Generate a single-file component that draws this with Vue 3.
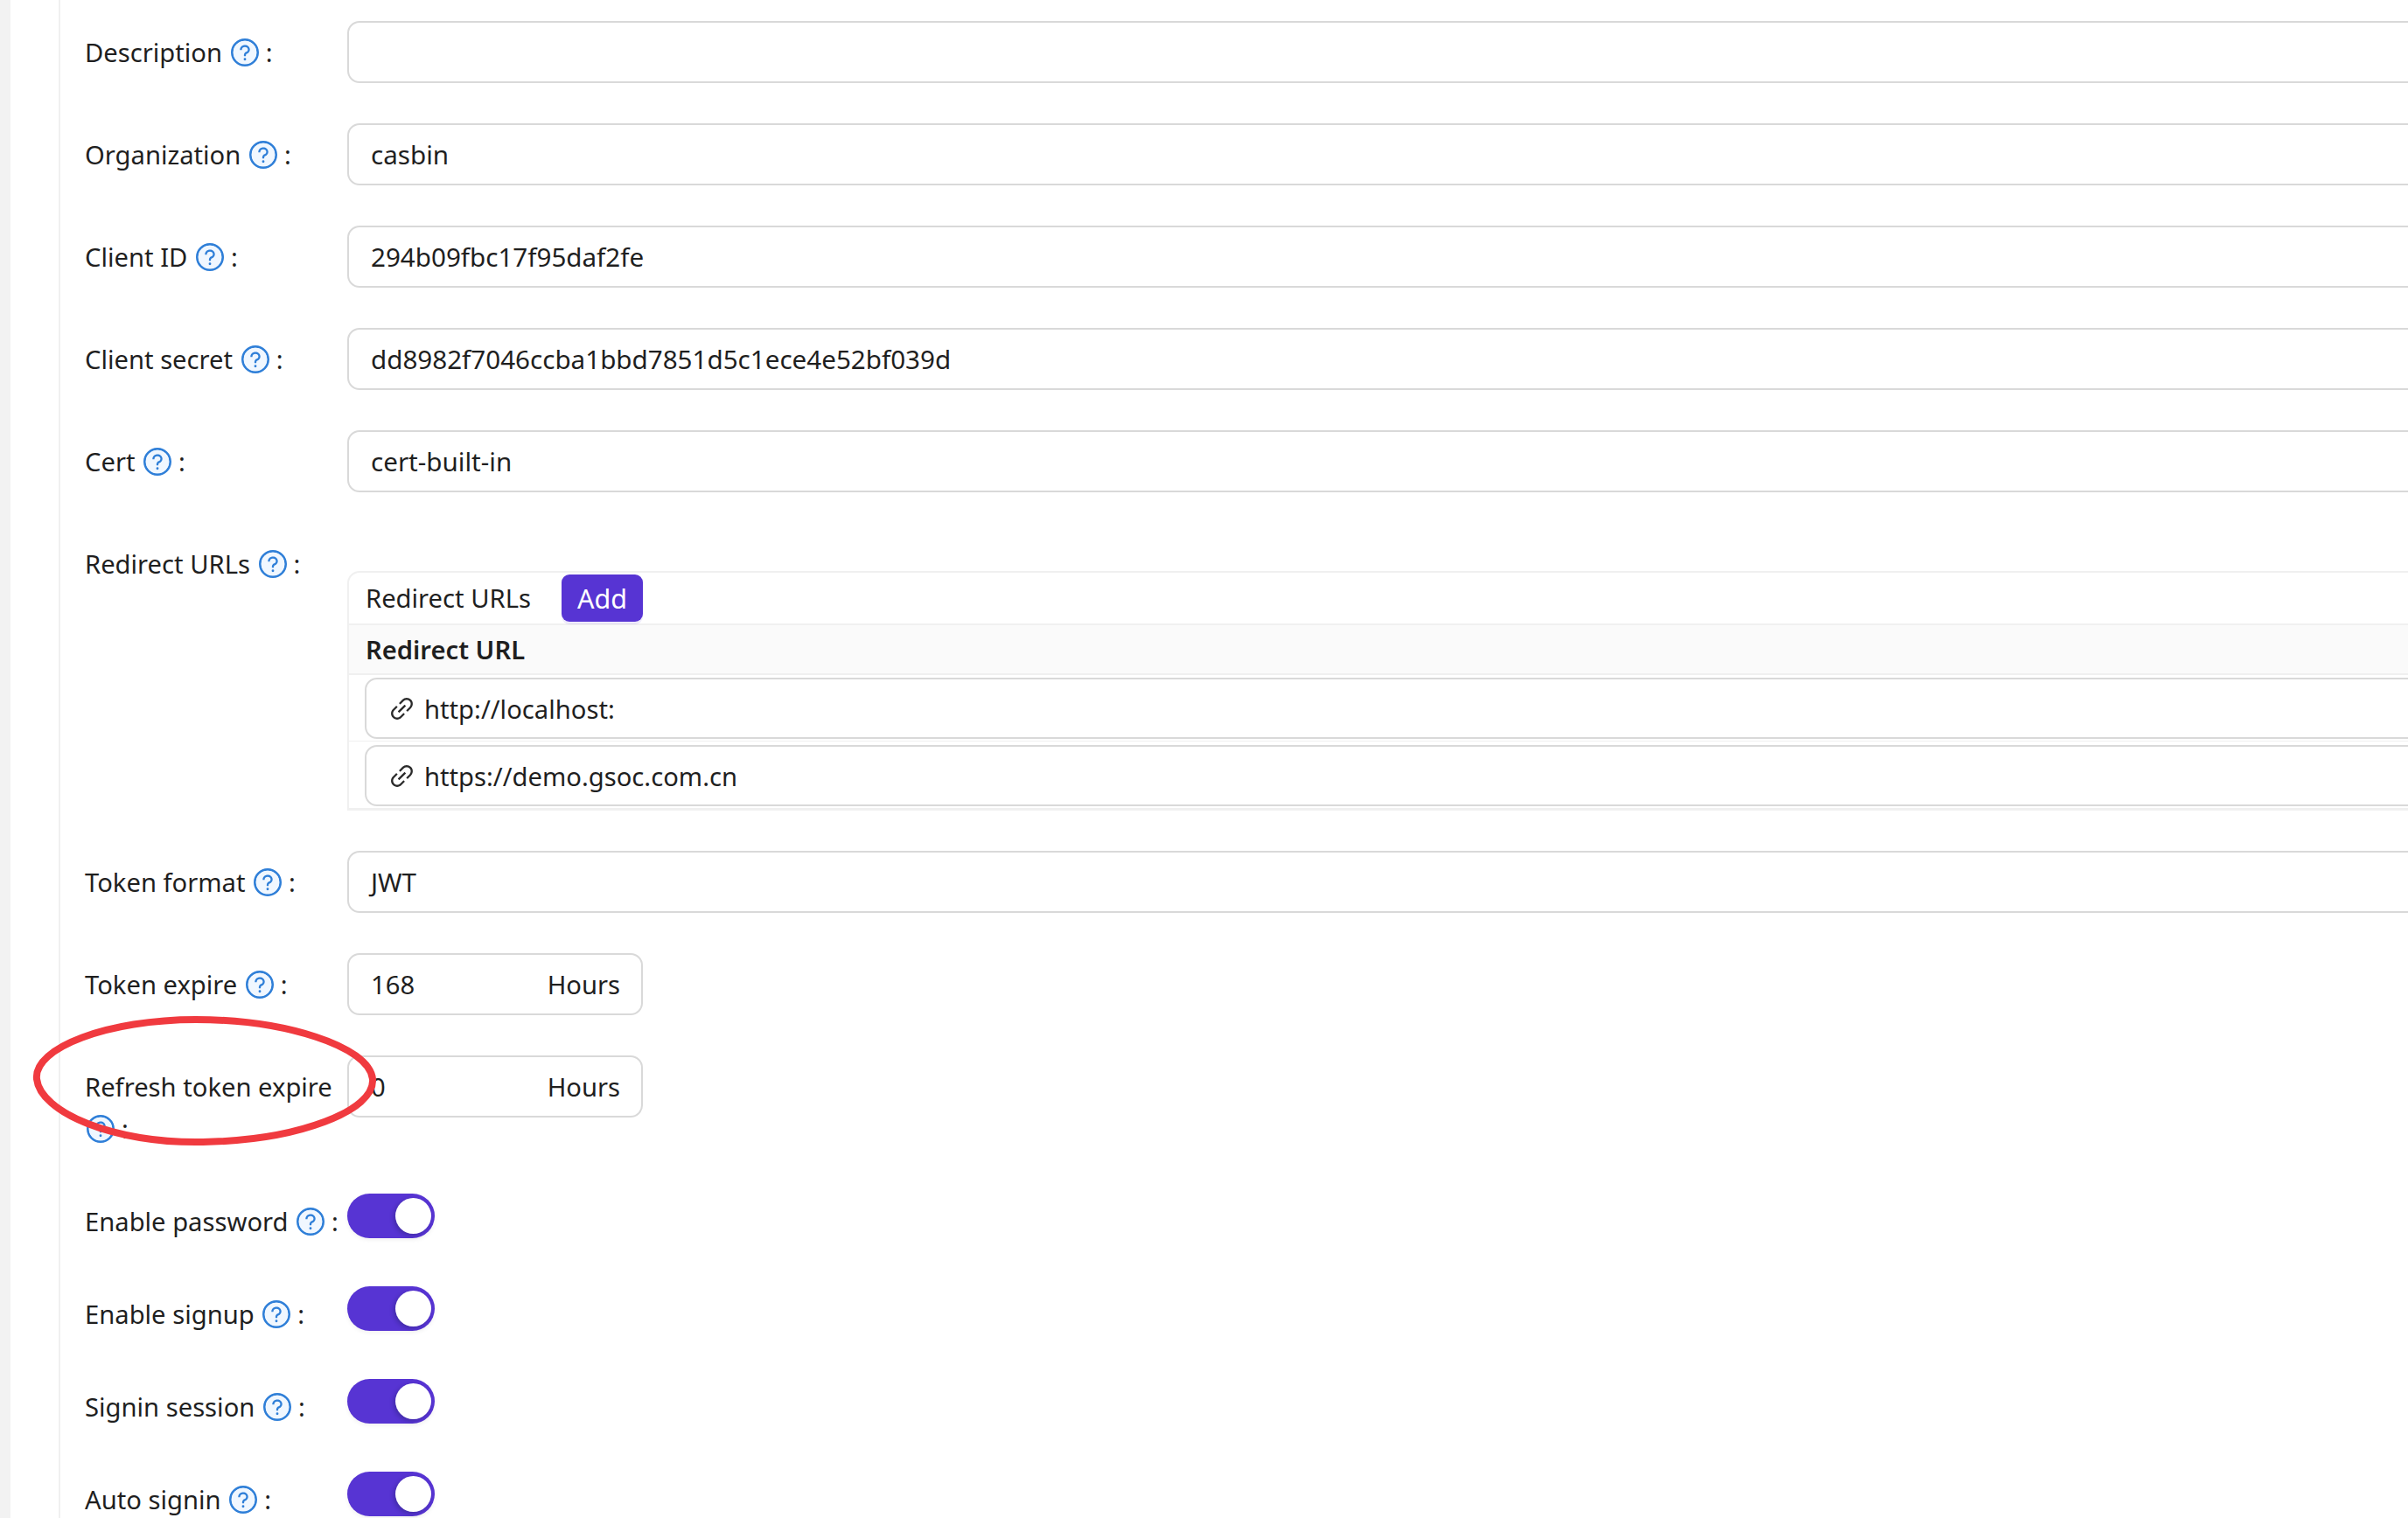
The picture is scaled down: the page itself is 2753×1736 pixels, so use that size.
<template>
  <div class="page">
    <div class="strip"></div>
    <div class="card">
      <div
        v-for="row in rows"
        :key="row.label"
        class="row"
      >
        <div class="label">
          {{ row.label }}
          <svg class="help" viewBox="64 64 896 896">
            <path fill="#2f7fd8" d="M512 64C264.6 64 64 264.6 64 512s200.6 448 448 448 448-200.6 448-448S759.4 64 512 64zm0 820c-205.4 0-372-166.6-372-372s166.6-372 372-372 372 166.6 372 372-166.6 372-372 372z" />
            <circle cx="512" cy="512" r="372" fill="#f0f7ff" />
            <path fill="#2f7fd8" d="M472 728a40 40 0 1080 0 40 40 0 10-80 0zM623.6 316.7C593.6 290.4 554 276 512 276s-81.6 14.5-111.6 40.7C369.2 344 352 380.7 352 420v7.6c0 4.4 3.6 8 8 8h48c4.4 0 8-3.6 8-8V420c0-44.1 43.1-80 96-80s96 35.9 96 80c0 31.1-22 59.4-56.1 72.5-21.2 8.1-39.2 22.3-52.1 40.9-13.1 19-19.9 41.8-19.9 64.9V620c0 4.4 3.6 8 8 8h48c4.4 0 8-3.6 8-8v-22.7a48.3 48.3 0 0130.9-44.8c59-22.7 97.1-74.7 97.1-132.5.1-39.3-17.1-76-48.3-103.3z" />
          </svg>
          <span class="colon">:</span>
        </div>

        <!-- Text input -->
        <div v-if="row.type === 'text'" class="input">{{ row.value }}</div>

        <!-- Number + unit -->
        <div v-else-if="row.type === 'number'" class="input input-number">
          <span>{{ row.value }}</span>
          <span>Hours</span>
        </div>

        <!-- Switch -->
        <div v-else-if="row.type === 'switch'" class="switch"><span class="knob"></span></div>

        <!-- Redirect URLs table -->
        <div v-else class="table">
          <div class="table-title">
            <span>Redirect URLs</span>
            <button class="btn-add">Add</button>
          </div>
          <div class="table-head">Redirect URL</div>
          <div v-for="url in urls" :key="url" class="table-row">
            <div class="input url-input">
              <svg class="link" viewBox="64 64 896 896">
                <path fill="#2b2b2b" d="M574 665.4a8.03 8.03 0 00-11.3 0L446.5 781.6c-53.8 53.8-144.6 59.5-204 0-59.5-59.5-53.8-150.2 0-204l116.2-116.2c3.1-3.1 3.1-8.2 0-11.3l-39.8-39.8a8.03 8.03 0 00-11.3 0L191.4 526.5c-84.6 84.6-84.6 221.5 0 306s221.5 84.6 306 0l116.2-116.2c3.1-3.1 3.1-8.2 0-11.3L574 665.4zm258.6-474c-84.6-84.6-221.5-84.6-306 0L410.3 307.6a8.03 8.03 0 000 11.3l39.7 39.7c3.1 3.1 8.2 3.1 11.3 0l116.2-116.2c53.8-53.8 144.6-59.5 204 0 59.5 59.5 53.8 150.2 0 204L665.3 562.6a8.03 8.03 0 000 11.3l39.8 39.8c3.1 3.1 8.2 3.1 11.3 0l116.2-116.2c84.5-84.6 84.5-221.5 0-306.1zM610.1 372.3a8.03 8.03 0 00-11.3 0L372.3 598.7a8.03 8.03 0 000 11.3l39.6 39.6c3.1 3.1 8.2 3.1 11.3 0l226.4-226.4c3.1-3.1 3.1-8.2 0-11.3l-39.5-39.6z" />
              </svg>
              <span>{{ url }}</span>
            </div>
          </div>
        </div>
      </div>
    </div>

    <!-- Red marker drawn over the screenshot -->
    <svg class="marker" viewBox="0 0 400 155">
      <path d="M8 74C4 38 90 6 190 6c100 0 198 30 202 68 3 36-84 70-194 72C96 148 12 112 8 74z" />
    </svg>
  </div>
</template>

<script setup>
const rows = [
  { label: 'Description', type: 'text', value: '' },
  { label: 'Organization', type: 'text', value: 'casbin' },
  { label: 'Client ID', type: 'text', value: '294b09fbc17f95daf2fe' },
  { label: 'Client secret', type: 'text', value: 'dd8982f7046ccba1bbd7851d5c1ece4e52bf039d' },
  { label: 'Cert', type: 'text', value: 'cert-built-in' },
  { label: 'Redirect URLs', type: 'urls' },
  { label: 'Token format', type: 'text', value: 'JWT' },
  { label: 'Token expire', type: 'number', value: '168' },
  { label: 'Refresh token expire', type: 'number', value: '0' },
  { label: 'Enable password', type: 'switch' },
  { label: 'Enable signup', type: 'switch' },
  { label: 'Signin session', type: 'switch' },
  { label: 'Auto signin', type: 'switch' },
]

const urls = ['http://localhost:', 'https://demo.gsoc.com.cn']
</script>

<style>
html, body {
  margin: 0;
  background: #fff;
  overflow: hidden;
}
</style>

<style scoped>
.page {
  position: relative;
  display: flex;
  width: 2753px;
  height: 1736px;
  overflow: hidden;
  font-family: "Noto Sans", "Open Sans", sans-serif;
  font-size: 29.2px;
  color: #1f1f1f;
}

.strip {
  flex: none;
  width: 12px;
  background: #f2f2f2;
}

.card {
  flex: none;
  width: 2800px;
  margin-left: 55px;
  padding: 24px 0 0 28px;
  border-left: 2px solid #f0f0f0;
}

.row {
  display: flex;
  align-items: flex-start;
  margin-bottom: 46px;
}

.label {
  flex: none;
  width: 300px;
  box-sizing: border-box;
  padding: 12px 8px 0 0;
  line-height: 48px;
}

.help {
  width: 32px;
  height: 32px;
  margin-left: 2px;
  vertical-align: -5px;
}
.colon { margin-left: 8px; }

.input {
  flex: 1;
  box-sizing: border-box;
  height: 71px;
  padding: 0 25px;
  border: 2.6px solid #d9d9d9;
  border-radius: 14px;
  font-size: 29.6px;
  line-height: 68px;
  white-space: nowrap;
}

.input-number {
  flex: none;
  display: flex;
  justify-content: space-between;
  width: 338px;
  padding-right: 24px;
  font-size: 29.2px;
}

.switch {
  position: relative;
  flex: none;
  width: 100px;
  height: 51px;
  margin-top: 4px;
  border-radius: 26px;
  background: #5734d3;
  box-shadow: 0 2px 5px rgba(0, 0, 0, 0.06);
}
.knob {
  position: absolute;
  top: 5px;
  right: 4px;
  width: 41px;
  height: 41px;
  border-radius: 50%;
  background: #fff;
  box-shadow: -2px 2px 5px rgba(0, 20, 40, 0.25);
}

.table {
  flex: 1;
  margin-top: 44px;
  border: 2px solid #f0f0f0;
  border-bottom-width: 3px;
  border-radius: 14px 14px 0 0;
}

.table-title {
  display: flex;
  align-items: center;
  gap: 35px;
  height: 58px;
  padding-left: 19px;
  border-bottom: 2px solid #f0f0f0;
}

.btn-add {
  width: 93px;
  height: 54px;
  padding: 0;
  border: none;
  border-radius: 9px;
  background: #5734d3;
  box-shadow: 0 3px 0 rgba(87, 52, 211, 0.1);
  color: #fff;
  font: inherit;
  font-size: 30.5px;
}

.table-head {
  height: 55px;
  padding-left: 19px;
  background: #fafafa;
  border-bottom: 2px solid #f0f0f0;
  font-weight: 600;
  line-height: 56px;
}

.table-row {
  display: flex;
  padding: 3px 0 2px 18px;
  border-bottom: 1.5px solid #f0f0f0;
}
.table-row:last-child {
  padding-top: 4px;
  border-bottom: none;
}

.url-input {
  display: flex;
  align-items: center;
  gap: 11px;
  height: 70px;
  padding: 0 0 0 26px;
  font-size: 29.2px;
  line-height: normal;
}
.url-input span { padding-top: 2px; }

.link {
  flex: none;
  width: 29px;
  height: 29px;
}

.marker {
  position: absolute;
  left: 34px;
  top: 1160px;
  width: 400px;
  height: 155px;
  fill: none;
  stroke: #f03a3f;
  stroke-width: 8px;
}
</style>
